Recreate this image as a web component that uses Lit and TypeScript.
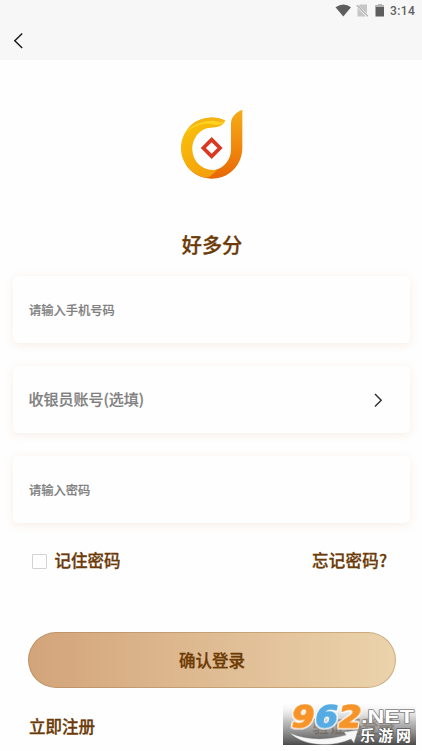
import { LitElement, html, css, svg } from "lit";
import { customElement, property } from "lit/decorators.js";

@customElement("status-bar")
class StatusBar extends LitElement {
  static styles = css`
    :host { display: flex; justify-content: flex-end; height: 21px; box-sizing: border-box; padding-right: 7px; align-items: center; }
    svg { display: block; width: 52px; height: 21px; flex: none; }
    .time { font: 500 12px/21px Roboto, sans-serif; color: #606060; letter-spacing: 0.4px; padding-top: 2px; margin-left: 4px; width: 25px; white-space: nowrap; }
  `;
  render() {
    return html`
      <svg viewBox="334 0 52 21">
        <path d="M335.5 7.2Q343.5 1.6 351 7.2L343.3 16.4Z" fill="#5e5e5e" />
        <path d="M367 4.5V13.5L358.5 5.8L360 4.5ZM357.5 7.8L366 16.5H357.5Z" fill="#c5c5c5" />
        <path d="M356.8 5.2L368 16.2" stroke="#b0b0b0" stroke-width="1.2" />
        <path d="M375.5 5.5H378V4H381.5V5.5H384V16.5H375.5Z" fill="#5e5e5e" />
        <path d="M375.5 5.5H378V4H381.5V5.5H384V7H375.5Z" fill="#b5b5b5" />
      </svg>
      <span class="time">3:14</span>`;
  }
}

@customElement("brand-logo")
class BrandLogo extends LitElement {
  static styles = css`:host { display: block; width: 85px; height: 90px; } svg { display: block; }`;
  render() {
    return html`<svg width="85" height="90" viewBox="0 0 255 270">
      <defs>
        <linearGradient id="stem" x1="0" y1="0" x2="0" y2="1">
          <stop offset="0" stop-color="#f6ac17" /><stop offset=".5" stop-color="#f18b0d" /><stop offset="1" stop-color="#e86706" />
        </linearGradient>
        <linearGradient id="ring" x1="0" y1="0" x2=".5" y2="1">
          <stop offset="0" stop-color="#f9c50b" /><stop offset="1" stop-color="#f4a10a" />
        </linearGradient>
      </defs>
      <path d="M217 29V143C217 193 179 236 125 236C91 236 61 219 46 190C75 211 105 215 132 211C162 205 183 180 183 148V71C183 52 196 37 217 29Z" fill="url(#stem)" />
      <path d="M166 62C150 55 137 52 119 53C70 55 33 96 33 145C33 191 67 225 107 233C115 232 126 227 141 209C99 216 67 184 67 147C67 111 93 84 122 83C143 82 158 78 166 62Z" fill="url(#ring)" />
      <path d="M166 62C137 46 75 51 45 101C74 72 111 68 133 74C145 77 158 72 166 62Z" fill="#fbd320" />
      <path d="M166 62C150 54 137 52 117 53C85 55 61 72 48 94C77 66 118 58 146 65C154 67 160 66 166 62Z" fill="#f5b316" />
      <path d="M125 119L150 144L125 169L100 144Z" fill="none" stroke="#dc3721" stroke-width="11" />
    </svg>`;
  }
}

@customElement("field-card")
class FieldCard extends LitElement {
  @property() label = "";
  @property({ type: Boolean, reflect: true }) select = false;
  static styles = css`
    :host { display: flex; align-items: center; justify-content: space-between; height: 67px; box-sizing: border-box;
      padding: 0 26px 0 16px; border-radius: 5px; background: #fefefe; box-shadow: 0 2px 8px rgba(200, 130, 70, 0.13); }
    .label { color: #808080; font-size: 12.25px; font-weight: 500; line-height: 20px; -webkit-text-stroke: 0.2px; }
    :host([select]) .label { font-size: 15px; margin-left: -0.5px; padding-bottom: 1px; }
    svg { display: block; }
  `;
  render() {
    return html`<span class="label">${this.label}</span>
      ${this.select
        ? html`<svg width="11" height="16" viewBox="0 0 11 16"><path d="M2 2L8.2 8.3L2 14.5" fill="none" stroke="#2b2b2b" stroke-width="1.4" /></svg>`
        : null}`;
  }
}

@customElement("site-badge")
class SiteBadge extends LitElement {
  static styles = css`
    :host { display: block; width: 133px; height: 43px; }
    svg { display: block; overflow: visible; }
    .outlined { paint-order: stroke; stroke-linejoin: round; }
    .digits { filter: drop-shadow(1px 0 0 #fff) drop-shadow(-1px 0 0 #fff) drop-shadow(0 1px 0 #fff) drop-shadow(0 -1px 0 #fff); }
    .digit { font: 700 31px "DejaVu Sans", sans-serif; stroke-width: 1.5px; }
    .net { font: 700 18px "Liberation Sans", sans-serif; fill: #fff; stroke: #808080; stroke-width: 1.4px; }
    .cn { font: 700 15px "Noto Sans CJK SC", sans-serif; fill: #fff; stroke: #555; stroke-width: 1.4px; }
  `;
  render() {
    const digits = [
      { x: 7, c: "9", color: "#f69429" },
      { x: 30.5, c: "6", color: "#55abe2" },
      { x: 54, c: "2", color: "#f69429" },
    ];
    return html`<svg width="133" height="43" viewBox="0 0 133 43">
      <defs>
        <linearGradient id="shade" x1="0" y1="0" x2="0" y2="1">
          <stop offset="0" stop-color="#fff" stop-opacity=".1" /><stop offset=".45" stop-color="#aaa" stop-opacity=".75" /><stop offset="1" stop-color="#444" stop-opacity=".97" />
        </linearGradient>
      </defs>
      <rect width="133" height="43" fill="url(#shade)" />
      <path d="M7 31C25 39 46 38 63 33L61 30L75 28L71 41L68 37C48 46 20 44 7 31Z" fill="#f7f7f7" stroke="#888" stroke-width=".4" />
      <g class="digits" transform="translate(4.5 0) skewX(-11)">
        ${digits.map(d => svg`<text class="outlined digit" x=${d.x} y="25.5" textLength="23" lengthAdjust="spacingAndGlyphs" fill=${d.color} stroke=${d.color}>${d.c}</text>`)}
      </g>
      <text class="outlined net" x="78" y="20.5" textLength="53" lengthAdjust="spacingAndGlyphs">.NET</text>
      <text class="outlined cn" x="77" y="38.5" textLength="51" lengthAdjust="spacing">乐游网</text>
    </svg>`;
  }
}

@customElement("app-root")
class AppRoot extends LitElement {
  static styles = css`
    :host { display: flex; flex-direction: column; position: relative; height: 751px; box-sizing: border-box; overflow: hidden;
      background: #fefefe; color: #6b3a08; font: 500 16.5px/24px "Noto Sans CJK SC", sans-serif; -webkit-text-stroke: 0.3px; }
    .header { height: 60px; flex: none; background: #f7f7f7; -webkit-text-stroke: 0; }
    .back { display: block; margin: 11px 0 0 11.5px; }
    .logo { margin: 40px auto 0 170px; }
    .title { margin: 40px 0 0 2px; text-align: center; font-size: 20.2px; line-height: 30px; }
    .fields { display: flex; flex-direction: column; gap: 23px; margin: 16px 12px 0 13px; }
    .options { display: flex; align-items: center; justify-content: space-between; margin-top: 25px; padding: 0 34.5px 0 32px; }
    .remember { display: flex; align-items: center; gap: 7.5px; }
    .forgot { letter-spacing: 0.3px; }
    .box { width: 15px; height: 15px; box-sizing: border-box; border: 1px solid #d2d2d2; border-radius: 1px; margin-top: 2px; }
    .login { margin: 60px 26px 0 28px; height: 56px; box-sizing: border-box; flex: none; border: 1px solid rgba(160, 120, 70, 0.4);
      border-radius: 28px; background: linear-gradient(90deg, #d3a47a, #ebd3ac) border-box; color: #6d3a04;
      font: inherit; padding: 0 0 1px; }
    .links { display: flex; justify-content: space-between; margin-top: 26px; padding: 0 27px 0 29px; }
    .badge { position: absolute; right: 6px; bottom: 6px; -webkit-text-stroke: initial; }
  `;
  render() {
    return html`
      <div class="header">
        <status-bar></status-bar>
        <svg class="back" width="14" height="18" viewBox="0 0 14 18"><path d="M10.2 1.5L2.8 8.7L10.2 16" fill="none" stroke="#151515" stroke-width="1.4" /></svg>
      </div>
      <brand-logo class="logo"></brand-logo>
      <div class="title">好多分</div>
      <div class="fields">
        <field-card label="请输入手机号码"></field-card>
        <field-card select label="收银员账号(选填)"></field-card>
        <field-card label="请输入密码"></field-card>
      </div>
      <div class="options">
        <span class="remember"><span class="box"></span>记住密码</span>
        <span class="forgot">忘记密码?</span>
      </div>
      <button class="login">确认登录</button>
      <div class="links"><span>立即注册</span><span>验证码登录</span></div>
      <site-badge class="badge"></site-badge>`;
  }
}
